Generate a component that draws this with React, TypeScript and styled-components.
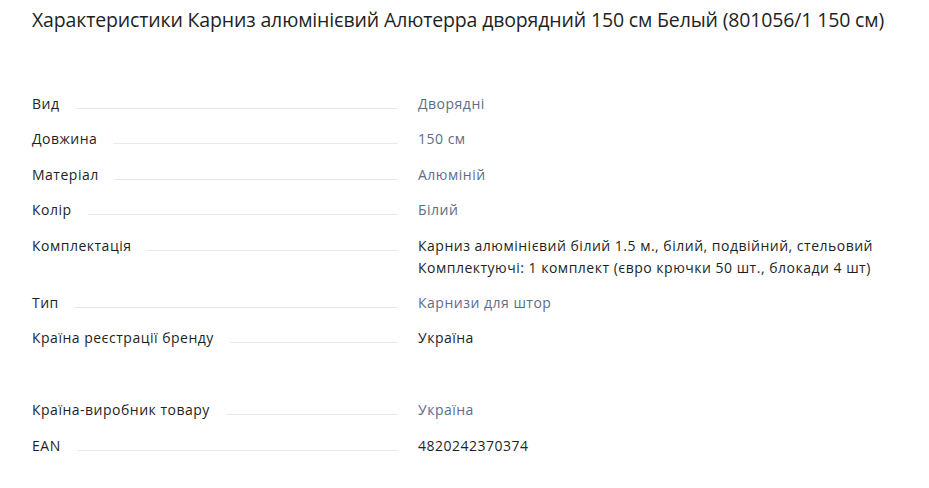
import React from "react";
import styled, { createGlobalStyle } from "styled-components";

const GlobalStyle = createGlobalStyle`
  html, body { margin: 0; padding: 0; background: #ffffff; }
  body { font-family: "Open Sans", "Noto Sans", Arial, sans-serif; color: #221f1f; }
`;

const Page = styled.div`
  padding: 6px 32px 0 32px;
`;

const Title = styled.h1`
  margin: 0;
  font-size: 19.5px;
  line-height: 28px;
  letter-spacing: -0.15px;
  font-weight: 400;
  color: #221f1f;
  white-space: nowrap;
`;

const List = styled.div`
  margin-top: 59px;
  display: flex;
  flex-direction: column;
  gap: 50px;
`;

const Group = styled.dl`
  margin: 0;
  display: flex;
  flex-direction: column;
  gap: 13.4px;
`;

const Row = styled.div`
  display: grid;
  grid-template-columns: 366px 1fr;
  column-gap: 20px;
  font-size: 14px;
  line-height: 22px;
  letter-spacing: 0.5px;
`;

const Label = styled.dt`
  margin: 0;
  display: flex;
  align-items: baseline;
  color: #221f1f;
  &::after {
    content: "";
    flex: 1;
    margin-left: 16px;
    border-bottom: 1px solid #e9e9e9;
    margin-bottom: -2px;
  }
`;

const Value = styled.dd<{ $link?: boolean }>`
  margin: 0;
  color: ${(p) => (p.$link ? "#5d6c8a" : "#221f1f")};
`;

const ValueLine = styled.div``;

type Item = { label: string; value: string[]; link?: boolean };

const groups: Item[][] = [
  [
    { label: "Вид", value: ["Дворядні"], link: true },
    { label: "Довжина", value: ["150 см"], link: true },
    { label: "Матеріал", value: ["Алюміній"], link: true },
    { label: "Колір", value: ["Білий"], link: true },
    {
      label: "Комплектація",
      value: [
        "Карниз алюмінієвий білий 1.5 м., білий, подвійний, стельовий",
        "Комплектуючі: 1 комплект (євро крючки 50 шт., блокади 4 шт)",
      ],
    },
    { label: "Тип", value: ["Карнизи для штор"], link: true },
    { label: "Країна реєстрації бренду", value: ["Україна"] },
  ],
  [
    { label: "Країна-виробник товару", value: ["Україна"], link: true },
    { label: "EAN", value: ["4820242370374"] },
  ],
];

export default function App() {
  return (
    <>
      <GlobalStyle />
      <Page>
        <Title>Характеристики Карниз алюмінієвий Алютерра дворядний 150 см Белый (801056/1 150 см)</Title>
        <List>
          {groups.map((g, gi) => (
            <Group key={gi}>
              {g.map((it) => (
                <Row key={it.label}>
                  <Label>{it.label}</Label>
                  <Value $link={it.link}>
                    {it.value.map((v) => (
                      <ValueLine key={v}>{v}</ValueLine>
                    ))}
                  </Value>
                </Row>
              ))}
            </Group>
          ))}
        </List>
      </Page>
    </>
  );
}
